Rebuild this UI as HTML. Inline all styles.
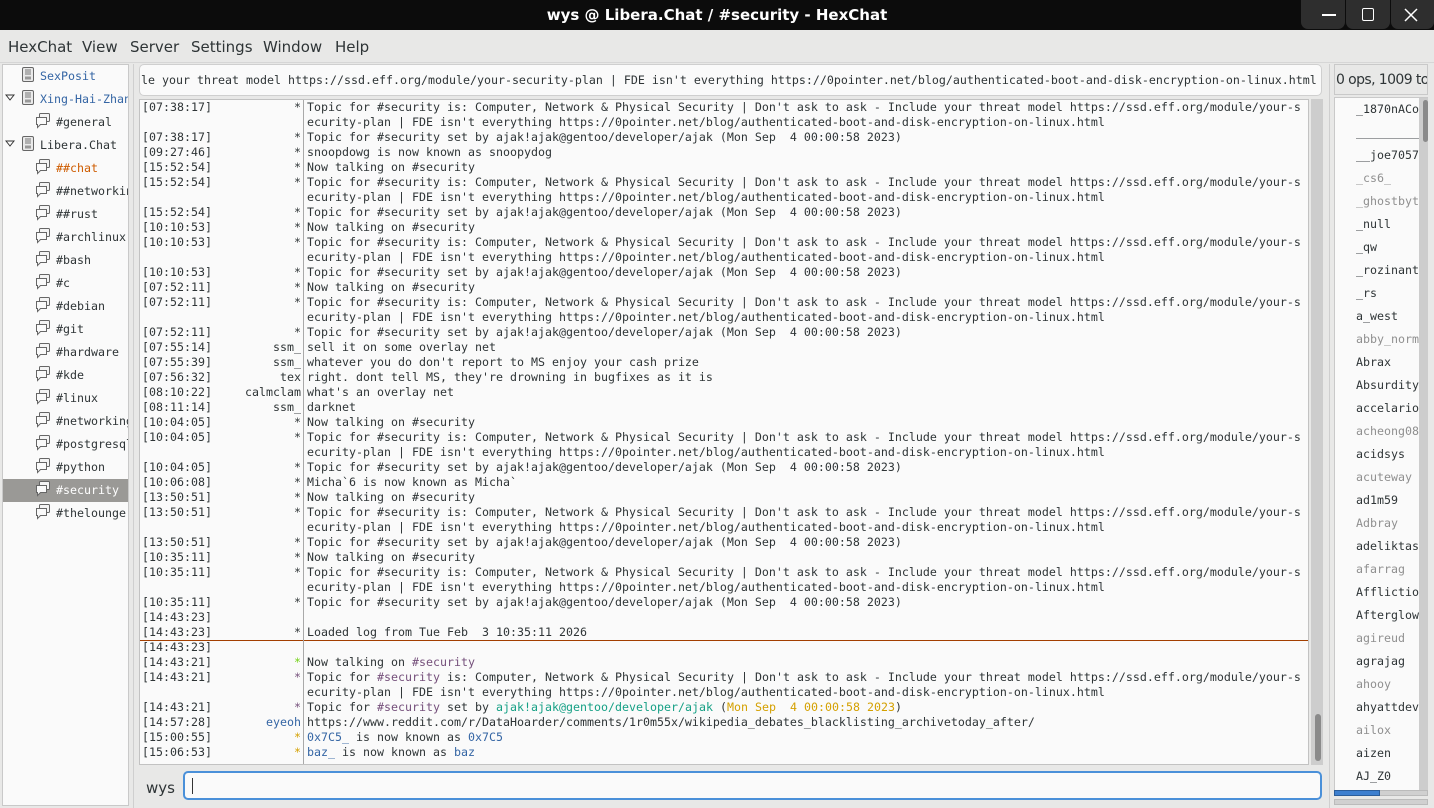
<!DOCTYPE html>
<html><head><meta charset="utf-8"><style>
*{margin:0;padding:0;box-sizing:border-box}
body{width:1434px;height:808px;background:#e8e8e7;position:relative;overflow:hidden;font-family:"DejaVu Sans","Liberation Sans",sans-serif;color:#2e3436}
.abs{position:absolute}
.mono{font-family:"DejaVu Sans Mono","Liberation Mono",monospace;font-size:11.63px}
#title{left:0;top:0;width:1434px;height:30px;background:#0c0c0c;color:#fff;font-weight:bold;font-size:15px;text-align:center;line-height:30px}
.wb{top:0;width:44px;height:29px;background:#2e2e2e;border-radius:0 0 7px 7px}
#menu{top:31px;left:0;width:1434px;height:32px;font-size:15px;line-height:32px}
#menu span{position:absolute;top:0}
#tree{left:2px;top:64px;width:127px;height:742px;background:#fafafa;border:1px solid #c9c9c9}
.ti{position:absolute;height:23px;line-height:23px;white-space:nowrap;overflow:hidden}
#topic{left:139px;top:64px;width:1183px;height:32px;background:#fafafa;border:1px solid #cfcfcf;border-radius:5px;line-height:30px;padding-left:1px;white-space:nowrap;overflow:hidden}
#chat{left:139px;top:99px;width:1170px;height:666px;background:#fafafa;border:1px solid #c2c2c2;overflow:hidden}
.r{position:absolute;left:0;height:15px;line-height:15px;white-space:pre;width:1170px}
.t{position:absolute;left:2px}
.n{position:absolute;right:1009px;text-align:right}
.m{position:absolute;left:167px}
#sep{left:303px;top:100px;width:1px;height:664px;background:#a9a9a9}
#vs{left:1311px;top:99px;width:12px;height:666px;background:#cdcdcd}
#inp{left:183px;top:771px;width:1139px;height:29px;background:#fafafa;border:2px solid #4a90d9;border-radius:5px}
#uh{left:1334px;top:64px;width:94px;height:31px;border:1px solid #c9c9c9;font-size:14px;letter-spacing:-0.6px;line-height:30px;white-space:nowrap;overflow:hidden;padding-left:1px}
#ul{left:1334px;top:97px;width:94px;height:694px;background:#fafafa;border:1px solid #c9c9c9;overflow:hidden}
.u{position:absolute;left:21px;height:23px;line-height:23px;white-space:nowrap}
.g{color:#8f8f8f}
</style></head><body>
<div id="title" class="abs">wys @ Libera.Chat / #security - HexChat</div>
<div class="abs wb" style="left:1301px"></div><div class="abs wb" style="left:1346px"></div><div class="abs wb" style="left:1391px;width:43px"></div>
<div class="abs" style="left:1322px;top:14px;width:14px;height:1.5px;background:#fff"></div>
<div class="abs" style="left:1362px;top:8px;width:12px;height:13px;border:1.5px solid #fff;border-radius:2px"></div>
<svg class="abs" style="left:1404px;top:8px" width="14" height="14"><path d="M1 1L13 13M13 1L1 13" stroke="#fff" stroke-width="1.5"/></svg>
<div id="menu" class="abs"><span style="left:8px">HexChat</span><span style="left:82px">View</span><span style="left:130px">Server</span><span style="left:191px">Settings</span><span style="left:263px">Window</span><span style="left:335px">Help</span></div>
<div class="abs" style="left:0;top:62px;width:1434px;height:1px;background:#d6d6d6"></div>
<div class="abs" style="left:133px;top:64px;width:1px;height:744px;background:#cfcfcf"></div>
<div class="abs" style="left:1329px;top:64px;width:1px;height:744px;background:#cfcfcf"></div>

<div id="tree" class="abs mono">
<svg width="0" height="0" style="position:absolute"><defs>
<g id="srv"><rect x="1.5" y="0.5" width="11" height="14" rx="1.5" fill="#eaeaea" stroke="#666"/><path d="M4 3h6M4 5h6M4 7h6" stroke="#777"/><rect x="4" y="9.5" width="6" height="3" fill="#999"/></g>
<g id="ch"><rect x="4.5" y="0.5" width="10" height="8" rx="1" fill="#f4f4f4" stroke="#666"/><path d="M1.5 4.5h10v7h-6l-3 3v-3h-1z" fill="#fafafa" stroke="#666"/></g>
</defs></svg>
</div>
<div class="abs mono" style="left:3px;top:65px;width:125px;height:740px;overflow:hidden">
<div class="ti" style="top:0;left:18px"><svg width="15" height="16" style="vertical-align:-3px"><use href="#srv"/></svg><span style="color:#3465a4;margin-left:4px">SexPosit</span></div>
<svg class="abs" style="left:2px;top:29px" width="10" height="8"><path d="M1 1h8l-4 5z" fill="none" stroke="#333"/></svg>
<div class="ti" style="top:23px;left:18px"><svg width="15" height="16" style="vertical-align:-3px"><use href="#srv"/></svg><span style="color:#3465a4;margin-left:4px">Xing-Hai-Zhang</span></div>
<div class="ti" style="top:46px;left:32px"><svg width="16" height="16" style="vertical-align:-3px"><use href="#ch"/></svg><span style="margin-left:5px">#general</span></div>
<svg class="abs" style="left:2px;top:75px" width="10" height="8"><path d="M1 1h8l-4 5z" fill="none" stroke="#333"/></svg>
<div class="ti" style="top:69px;left:18px"><svg width="15" height="16" style="vertical-align:-3px"><use href="#srv"/></svg><span style="margin-left:4px">Libera.Chat</span></div>
<div class="ti" style="top:92px;left:32px"><svg width="16" height="16" style="vertical-align:-3px"><use href="#ch"/></svg><span style="color:#ce5c00;margin-left:5px">##chat</span></div>
<div class="ti" style="top:115px;left:32px"><svg width="16" height="16" style="vertical-align:-3px"><use href="#ch"/></svg><span style="margin-left:5px">##networking</span></div>
<div class="ti" style="top:138px;left:32px"><svg width="16" height="16" style="vertical-align:-3px"><use href="#ch"/></svg><span style="margin-left:5px">##rust</span></div>
<div class="ti" style="top:161px;left:32px"><svg width="16" height="16" style="vertical-align:-3px"><use href="#ch"/></svg><span style="margin-left:5px">#archlinux</span></div>
<div class="ti" style="top:184px;left:32px"><svg width="16" height="16" style="vertical-align:-3px"><use href="#ch"/></svg><span style="margin-left:5px">#bash</span></div>
<div class="ti" style="top:207px;left:32px"><svg width="16" height="16" style="vertical-align:-3px"><use href="#ch"/></svg><span style="margin-left:5px">#c</span></div>
<div class="ti" style="top:230px;left:32px"><svg width="16" height="16" style="vertical-align:-3px"><use href="#ch"/></svg><span style="margin-left:5px">#debian</span></div>
<div class="ti" style="top:253px;left:32px"><svg width="16" height="16" style="vertical-align:-3px"><use href="#ch"/></svg><span style="margin-left:5px">#git</span></div>
<div class="ti" style="top:276px;left:32px"><svg width="16" height="16" style="vertical-align:-3px"><use href="#ch"/></svg><span style="margin-left:5px">#hardware</span></div>
<div class="ti" style="top:299px;left:32px"><svg width="16" height="16" style="vertical-align:-3px"><use href="#ch"/></svg><span style="margin-left:5px">#kde</span></div>
<div class="ti" style="top:322px;left:32px"><svg width="16" height="16" style="vertical-align:-3px"><use href="#ch"/></svg><span style="margin-left:5px">#linux</span></div>
<div class="ti" style="top:345px;left:32px"><svg width="16" height="16" style="vertical-align:-3px"><use href="#ch"/></svg><span style="margin-left:5px">#networking</span></div>
<div class="ti" style="top:368px;left:32px"><svg width="16" height="16" style="vertical-align:-3px"><use href="#ch"/></svg><span style="margin-left:5px">#postgresql</span></div>
<div class="ti" style="top:391px;left:32px"><svg width="16" height="16" style="vertical-align:-3px"><use href="#ch"/></svg><span style="margin-left:5px">#python</span></div>
<div class="ti" style="top:414px;left:0;width:125px;padding-left:32px;background:#9a9996;color:#fff"><svg width="16" height="16" style="vertical-align:-3px"><use href="#ch"/></svg><span style="margin-left:5px">#security</span></div>
<div class="ti" style="top:437px;left:32px"><svg width="16" height="16" style="vertical-align:-3px"><use href="#ch"/></svg><span style="margin-left:5px">#thelounge</span></div>
</div>

<div id="topic" class="abs mono">le your threat model https://ssd.eff.org/module/your-security-plan | FDE isn't everything https://0pointer.net/blog/authenticated-boot-and-disk-encryption-on-linux.html</div>

<div id="chat" class="abs mono">
<div class="r" style="top:0"><span class="t">[07:38:17]</span><span class="n">*</span><span class="m">Topic for #security is: Computer, Network &amp; Physical Security | Don't ask to ask - Include your threat model https://ssd.eff.org/module/your-s</span></div>
<div class="r" style="top:15px"><span class="m">ecurity-plan | FDE isn't everything https://0pointer.net/blog/authenticated-boot-and-disk-encryption-on-linux.html</span></div>
<div class="r" style="top:30px"><span class="t">[07:38:17]</span><span class="n">*</span><span class="m">Topic for #security set by ajak!ajak@gentoo/developer/ajak (Mon Sep  4 00:00:58 2023)</span></div>
<div class="r" style="top:45px"><span class="t">[09:27:46]</span><span class="n">*</span><span class="m">snoopdowg is now known as snoopydog</span></div>
<div class="r" style="top:60px"><span class="t">[15:52:54]</span><span class="n">*</span><span class="m">Now talking on #security</span></div>
<div class="r" style="top:75px"><span class="t">[15:52:54]</span><span class="n">*</span><span class="m">Topic for #security is: Computer, Network &amp; Physical Security | Don't ask to ask - Include your threat model https://ssd.eff.org/module/your-s</span></div>
<div class="r" style="top:90px"><span class="m">ecurity-plan | FDE isn't everything https://0pointer.net/blog/authenticated-boot-and-disk-encryption-on-linux.html</span></div>
<div class="r" style="top:105px"><span class="t">[15:52:54]</span><span class="n">*</span><span class="m">Topic for #security set by ajak!ajak@gentoo/developer/ajak (Mon Sep  4 00:00:58 2023)</span></div>
<div class="r" style="top:120px"><span class="t">[10:10:53]</span><span class="n">*</span><span class="m">Now talking on #security</span></div>
<div class="r" style="top:135px"><span class="t">[10:10:53]</span><span class="n">*</span><span class="m">Topic for #security is: Computer, Network &amp; Physical Security | Don't ask to ask - Include your threat model https://ssd.eff.org/module/your-s</span></div>
<div class="r" style="top:150px"><span class="m">ecurity-plan | FDE isn't everything https://0pointer.net/blog/authenticated-boot-and-disk-encryption-on-linux.html</span></div>
<div class="r" style="top:165px"><span class="t">[10:10:53]</span><span class="n">*</span><span class="m">Topic for #security set by ajak!ajak@gentoo/developer/ajak (Mon Sep  4 00:00:58 2023)</span></div>
<div class="r" style="top:180px"><span class="t">[07:52:11]</span><span class="n">*</span><span class="m">Now talking on #security</span></div>
<div class="r" style="top:195px"><span class="t">[07:52:11]</span><span class="n">*</span><span class="m">Topic for #security is: Computer, Network &amp; Physical Security | Don't ask to ask - Include your threat model https://ssd.eff.org/module/your-s</span></div>
<div class="r" style="top:210px"><span class="m">ecurity-plan | FDE isn't everything https://0pointer.net/blog/authenticated-boot-and-disk-encryption-on-linux.html</span></div>
<div class="r" style="top:225px"><span class="t">[07:52:11]</span><span class="n">*</span><span class="m">Topic for #security set by ajak!ajak@gentoo/developer/ajak (Mon Sep  4 00:00:58 2023)</span></div>
<div class="r" style="top:240px"><span class="t">[07:55:14]</span><span class="n">ssm_</span><span class="m">sell it on some overlay net</span></div>
<div class="r" style="top:255px"><span class="t">[07:55:39]</span><span class="n">ssm_</span><span class="m">whatever you do don't report to MS enjoy your cash prize</span></div>
<div class="r" style="top:270px"><span class="t">[07:56:32]</span><span class="n">tex</span><span class="m">right. dont tell MS, they're drowning in bugfixes as it is</span></div>
<div class="r" style="top:285px"><span class="t">[08:10:22]</span><span class="n">calmclam</span><span class="m">what's an overlay net</span></div>
<div class="r" style="top:300px"><span class="t">[08:11:14]</span><span class="n">ssm_</span><span class="m">darknet</span></div>
<div class="r" style="top:315px"><span class="t">[10:04:05]</span><span class="n">*</span><span class="m">Now talking on #security</span></div>
<div class="r" style="top:330px"><span class="t">[10:04:05]</span><span class="n">*</span><span class="m">Topic for #security is: Computer, Network &amp; Physical Security | Don't ask to ask - Include your threat model https://ssd.eff.org/module/your-s</span></div>
<div class="r" style="top:345px"><span class="m">ecurity-plan | FDE isn't everything https://0pointer.net/blog/authenticated-boot-and-disk-encryption-on-linux.html</span></div>
<div class="r" style="top:360px"><span class="t">[10:04:05]</span><span class="n">*</span><span class="m">Topic for #security set by ajak!ajak@gentoo/developer/ajak (Mon Sep  4 00:00:58 2023)</span></div>
<div class="r" style="top:375px"><span class="t">[10:06:08]</span><span class="n">*</span><span class="m">Micha`6 is now known as Micha`</span></div>
<div class="r" style="top:390px"><span class="t">[13:50:51]</span><span class="n">*</span><span class="m">Now talking on #security</span></div>
<div class="r" style="top:405px"><span class="t">[13:50:51]</span><span class="n">*</span><span class="m">Topic for #security is: Computer, Network &amp; Physical Security | Don't ask to ask - Include your threat model https://ssd.eff.org/module/your-s</span></div>
<div class="r" style="top:420px"><span class="m">ecurity-plan | FDE isn't everything https://0pointer.net/blog/authenticated-boot-and-disk-encryption-on-linux.html</span></div>
<div class="r" style="top:435px"><span class="t">[13:50:51]</span><span class="n">*</span><span class="m">Topic for #security set by ajak!ajak@gentoo/developer/ajak (Mon Sep  4 00:00:58 2023)</span></div>
<div class="r" style="top:450px"><span class="t">[10:35:11]</span><span class="n">*</span><span class="m">Now talking on #security</span></div>
<div class="r" style="top:465px"><span class="t">[10:35:11]</span><span class="n">*</span><span class="m">Topic for #security is: Computer, Network &amp; Physical Security | Don't ask to ask - Include your threat model https://ssd.eff.org/module/your-s</span></div>
<div class="r" style="top:480px"><span class="m">ecurity-plan | FDE isn't everything https://0pointer.net/blog/authenticated-boot-and-disk-encryption-on-linux.html</span></div>
<div class="r" style="top:495px"><span class="t">[10:35:11]</span><span class="n">*</span><span class="m">Topic for #security set by ajak!ajak@gentoo/developer/ajak (Mon Sep  4 00:00:58 2023)</span></div>
<div class="r" style="top:510px"><span class="t">[14:43:23]</span></div>
<div class="r" style="top:525px"><span class="t">[14:43:23]</span><span class="n">*</span><span class="m">Loaded log from Tue Feb  3 10:35:11 2026</span></div>
<div class="abs" style="left:0;top:540px;width:1170px;height:1px;background:#a33f00"></div>
<div class="r" style="top:540px"><span class="t">[14:43:23]</span></div>
<div class="r" style="top:555px"><span class="t">[14:43:21]</span><span class="n" style="color:#73d216">*</span><span class="m">Now talking on <span style="color:#75507b">#security</span></span></div>
<div class="r" style="top:570px"><span class="t">[14:43:21]</span><span class="n" style="color:#75507b">*</span><span class="m">Topic for <span style="color:#75507b">#security</span> is: Computer, Network &amp; Physical Security | Don't ask to ask - Include your threat model https://ssd.eff.org/module/your-s</span></div>
<div class="r" style="top:585px"><span class="m">ecurity-plan | FDE isn't everything https://0pointer.net/blog/authenticated-boot-and-disk-encryption-on-linux.html</span></div>
<div class="r" style="top:600px"><span class="t">[14:43:21]</span><span class="n" style="color:#75507b">*</span><span class="m">Topic for <span style="color:#75507b">#security</span> set by <span style="color:#16a085">ajak!ajak@gentoo/developer/ajak</span> (<span style="color:#d4a000">Mon Sep  4 00:00:58 2023</span>)</span></div>
<div class="r" style="top:615px"><span class="t">[14:57:28]</span><span class="n" style="color:#3465a4">eyeoh</span><span class="m">https://www.reddit.com/r/DataHoarder/comments/1r0m55x/wikipedia_debates_blacklisting_archivetoday_after/</span></div>
<div class="r" style="top:630px"><span class="t">[15:00:55]</span><span class="n" style="color:#d4a000">*</span><span class="m"><span style="color:#3465a4">0x7C5_</span> is now known as <span style="color:#3465a4">0x7C5</span></span></div>
<div class="r" style="top:645px"><span class="t">[15:06:53]</span><span class="n" style="color:#d4a000">*</span><span class="m"><span style="color:#3465a4">baz_</span> is now known as <span style="color:#3465a4">baz</span></span></div>
</div>
<div id="sep" class="abs"></div>
<div id="vs" class="abs"></div>
<div class="abs" style="left:1315px;top:714px;width:6px;height:47px;background:#8a8a8a;border-radius:3px"></div>

<div class="abs" style="left:146px;top:779px;font-size:15px">wys</div>
<div id="inp" class="abs"></div>
<div class="abs" style="left:192px;top:778px;width:1px;height:16px;background:#333"></div>

<div id="uh" class="abs">0 ops, 1009 total</div>
<div id="ul" class="abs mono">
<div class="u" style="top:0">_1870nACo</div>
<div class="u" style="top:23px">_________</div>
<div class="u" style="top:46px">__joe7057</div>
<div class="u g" style="top:69px">_cs6_</div>
<div class="u g" style="top:92px">_ghostbyte</div>
<div class="u" style="top:115px">_null</div>
<div class="u" style="top:138px">_qw</div>
<div class="u" style="top:161px">_rozinante</div>
<div class="u" style="top:184px">_rs</div>
<div class="u" style="top:207px">a_west</div>
<div class="u g" style="top:230px">abby_norm</div>
<div class="u" style="top:253px">Abrax</div>
<div class="u" style="top:276px">Absurdity</div>
<div class="u" style="top:299px">accelario</div>
<div class="u g" style="top:322px">acheong08</div>
<div class="u" style="top:345px">acidsys</div>
<div class="u g" style="top:368px">acuteway</div>
<div class="u" style="top:391px">ad1m59</div>
<div class="u g" style="top:414px">Adbray</div>
<div class="u" style="top:437px">adeliktas</div>
<div class="u g" style="top:460px">afarrag</div>
<div class="u" style="top:483px">Affliction</div>
<div class="u" style="top:506px">Afterglow</div>
<div class="u g" style="top:529px">agireud</div>
<div class="u" style="top:552px">agrajag</div>
<div class="u g" style="top:575px">ahooy</div>
<div class="u" style="top:598px">ahyattdev</div>
<div class="u g" style="top:621px">ailox</div>
<div class="u" style="top:644px">aizen</div>
<div class="u" style="top:667px">AJ_Z0</div>
</div>
<div class="abs" style="left:1419px;top:98px;width:9px;height:692px;background:#cdcdcd"></div>
<div class="abs" style="left:1423px;top:100px;width:5px;height:42px;background:#8a8a8a;border-radius:3px"></div>
<div class="abs" style="left:1334px;top:790px;width:94px;height:6px;background:#d0d0d0;border:1px solid #bbb"></div>
<div class="abs" style="left:1334px;top:790px;width:46px;height:6px;background:#3d7fcf;border:1px solid #2b5d9a"></div>
<div class="abs" style="left:1334px;top:799px;width:94px;height:6px;background:#d0d0d0;border:1px solid #bbb"></div>
</body></html>
